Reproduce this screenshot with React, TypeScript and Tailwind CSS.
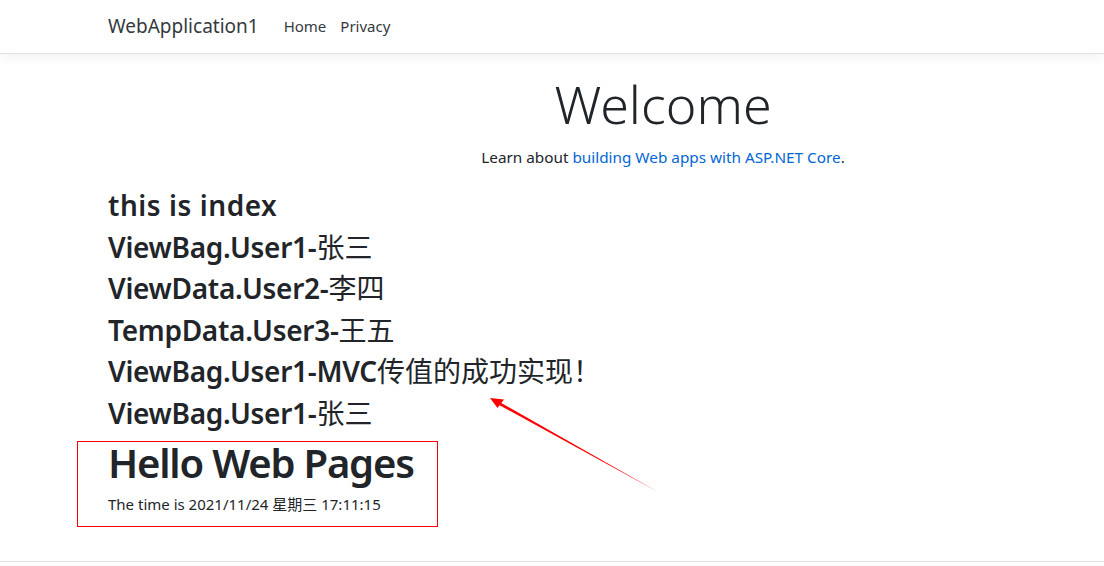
const font = 'font-["Segoe_UI","Noto_Sans","Noto_Sans_CJK_SC",sans-serif]'

// CJK parts come from a fallback face in the original, which renders at regular weight
const lines: [string, string][] = [
  ['ViewBag.User1-', '张三'],
  ['ViewData.User2-', '李四'],
  ['TempData.User3-', '王五'],
  ['ViewBag.User1-MVC', '传值的成功实现！'],
  ['ViewBag.User1-', '张三'],
]

function Annotations() {
  // red box + arrow drawn on top of the screenshot
  return (
    <svg className="pointer-events-none absolute left-0 top-0" width="1104" height="566">
      <rect x="77.5" y="441.5" width="360" height="85" fill="none" stroke="#ff0000" strokeWidth="1" />
      <polygon points="658,492 497,400.5 495.5,403 " fill="#ff0000" />
      <polygon points="490,398 504,399.5 497.5,408" fill="#ff0000" />
    </svg>
  )
}

export default function App() {
  return (
    <div className={`relative h-[566px] w-[1104px] overflow-hidden bg-white text-[#212529] ${font}`}>
      <header className="mb-4 h-[54px] border-b border-[#dee2e6] bg-white shadow-[0_4px_12px_rgba(0,0,0,0.05)]">
        <nav className="flex h-[53px] items-center pl-[108px]">
          <span className="text-[19px] text-[#343a40]">WebApplication1</span>
          <span className="ml-[25px] text-[15px] text-[#343a40]">Home</span>
          <span className="ml-[14px] text-[15px] text-[#343a40]">Privacy</span>
        </nav>
      </header>

      <main className="box-content w-[1110px] pl-[108px]">
        <div className="text-center">
          <h1 className="mb-2 text-[52px] leading-[67px] font-light">Welcome</h1>
          <p className="mb-4 text-[15.3px] leading-6">
            Learn about <span className="text-[#0366d6]">building Web apps with ASP.NET Core</span>.
          </p>
        </div>

        <div className="pt-1">
          <h3 className="mb-2 text-[28px] leading-[1.2] font-semibold tracking-[0.02em]">this is index</h3>
          {lines.map(([latin, cjk], i) => (
            <h3 key={i} className="mb-2 text-[28px] leading-[1.2] font-semibold tracking-[-0.01em]">
              {latin}
              <span className="font-normal tracking-normal">{cjk}</span>
            </h3>
          ))}
        </div>

        <h1 className="mb-[6px] text-[40px] leading-[47px] font-semibold tracking-[-0.03em]">Hello Web Pages</h1>
        <p className="text-[15px] leading-6">The time is 2021/11/24 星期三 17:11:15</p>
      </main>

      <footer className="absolute top-[561px] left-0 h-[60px] w-full border-t border-[#dee2e6]" />

      <Annotations />
    </div>
  )
}
